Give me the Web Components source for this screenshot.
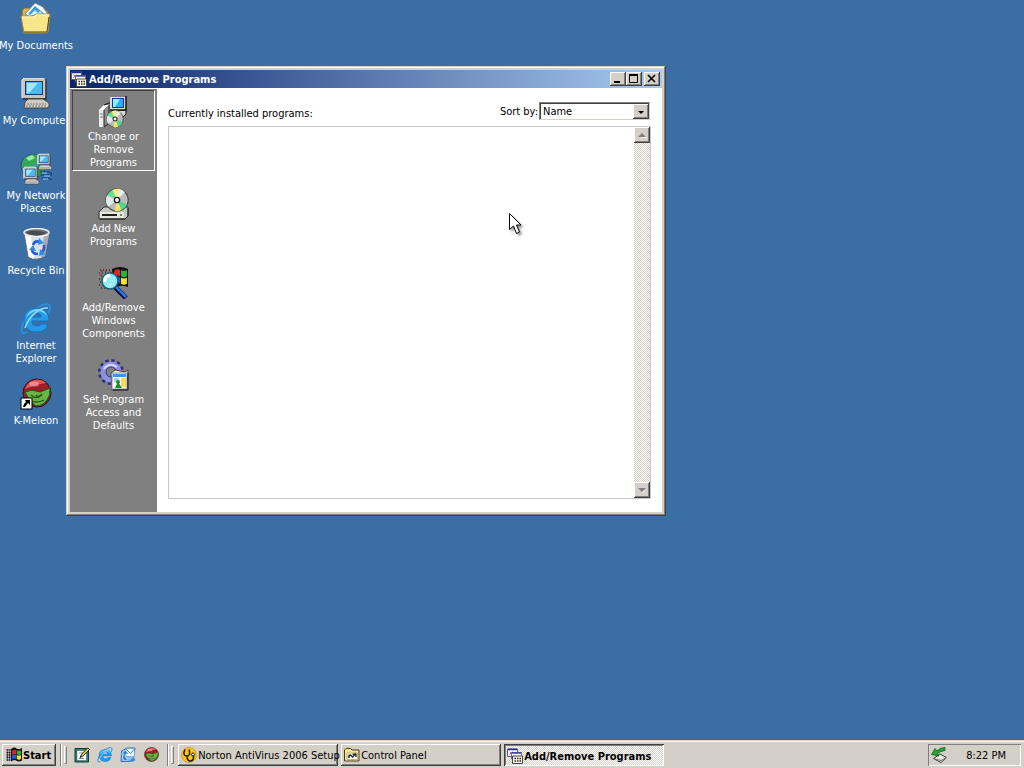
<!DOCTYPE html>
<html lang="en">
<head>
<meta charset="utf-8">
<title>Add/Remove Programs</title>
<style>
    html, body {
        height: 100%;
        margin: 0;
    }
    body {
        font-family: "DejaVu Sans Condensed", Tahoma, "Noto Sans", sans-serif;
        font-size: 11px;
        line-height: 13px;
        color: #000;
        overflow: hidden;
        --face: #d4d0c8;
        --desktop: #3a6ea5;
        --raised: inset -1px -1px #404040, inset 1px 1px #fff, inset -2px -2px #808080;
        --sunken: inset 1px 1px #808080, inset -1px -1px #fff;
    }
</style>
</head>
<body>
<desktop-screen>
    <desktop-icon icon="documents">My Documents</desktop-icon>
    <desktop-icon icon="computer">My Computer</desktop-icon>
    <desktop-icon icon="network">My Network Places</desktop-icon>
    <desktop-icon icon="recycle">Recycle Bin</desktop-icon>
    <desktop-icon icon="ie">Internet Explorer</desktop-icon>
    <desktop-icon icon="kmeleon-link">K-Meleon</desktop-icon>

    <app-window slot="window" icon="programs" heading="Add/Remove Programs">
        <side-item slot="side" icon="change" selected>Change or Remove Programs</side-item>
        <side-item slot="side" icon="add">Add New Programs</side-item>
        <side-item slot="side" icon="components">Add/Remove Windows Components</side-item>
        <side-item slot="side" icon="defaults">Set Program Access and Defaults</side-item>
        <program-list></program-list>
    </app-window>

    <task-bar slot="taskbar" time="8:22 PM">
        <quick-button slot="quick" icon="show-desktop" label="Show Desktop"></quick-button>
        <quick-button slot="quick" icon="ie" label="Internet Explorer"></quick-button>
        <quick-button slot="quick" icon="outlook" label="Outlook Express"></quick-button>
        <quick-button slot="quick" icon="kmeleon" label="K-Meleon"></quick-button>
        <task-button icon="norton">Norton AntiVirus 2006 Setup</task-button>
        <task-button icon="panel">Control Panel</task-button>
        <task-button icon="programs" active>Add/Remove Programs</task-button>
    </task-bar>
</desktop-screen>

<script>
// shared shapes
const monitor = /*html*/`
    <path d="M1 2L3 0H23L25 2V20H1z" fill="#c9c5bd"/>
    <path d="M1 20V2L3 0H23" fill="none" stroke="#f4f2ee"/>
    <path d="M25 1V21H2" fill="none" stroke="#333" stroke-width="1.5"/>
    <rect x="4" y="3" width="18" height="14" fill="#123a78"/>
    <rect x="5" y="4" width="16" height="12" fill="#4cb9f0"/>
    <path d="M6 5H17L8 15H6z" fill="#a8e6ff"/>
    <path d="M4 24L7 21H22L28 25V29L26 30H3z" fill="#cfcbc3" stroke="#47443e"/>
    <path d="M6 26H25M5 28H25" stroke="#817c72" stroke-dasharray="2 1"/>`;

const disc = /*html*/`
    <circle cx="0" cy="0" r="10" fill="#b9bcb8" stroke="#434843"/>
    <path d="M0 0L-9 -4A10 10 0 0 1 -4 -9z" fill="#5fe19a"/>
    <path d="M0 0L-4 -9A10 10 0 0 1 2 -10z" fill="#f4ef7c"/>
    <path d="M0 0L2 -10A10 10 0 0 1 7 -7z" fill="#e9ecea"/>
    <path d="M0 0L-9 -4A10 10 0 0 0 -8 6z" fill="#e3e8e6"/>
    <path d="M0 0L9 4A10 10 0 0 1 4 9z" fill="#4ed792"/>
    <path d="M0 0L4 9A10 10 0 0 1 -2 10z" fill="#f1e85f"/>
    <circle cx="0" cy="0" r="3" fill="#222"/><circle cx="0" cy="0" r="1.7" fill="#fff"/>`;

const flag = /*html*/`
    <path d="M0 2Q4 -1 7 1V7Q4 5 0 8z" fill="#e42424"/>
    <path d="M8 1Q12 3 15 1V7Q12 9 8 7z" fill="#27b536"/>
    <path d="M0 9Q4 6 7 8V14Q4 12 0 15z" fill="#2855e8"/>
    <path d="M8 8Q12 10 15 8V14Q12 16 8 14z" fill="#f4e52b"/>`;

const kmeleon = /*html*/`
    <circle cx="17" cy="15" r="14" fill="#9c1f26" stroke="#321313"/>
    <path d="M5 11A13 13 0 0 1 26 5Q17 6 5 11z" fill="#e25457"/>
    <ellipse cx="14" cy="6" rx="5" ry="2.5" fill="#f4a09f" opacity=".7"/>
    <path d="M5 14L12 12L20 14L30 10Q31 17 27 22Q23 28 16 28L10 23Z" fill="#69b541" stroke="#1f4d18"/>
    <path d="M11 17Q16 22 22 17M16 17L18 19L22 16M10 22Q16 26 24 22" fill="none" stroke="#245b1b" stroke-width="1.3"/>`;

const icons = {
    documents: /*html*/`
        <path d="M2 8L4 5H11L14 8H28V29H3z" fill="#d9b94d" stroke="#7e6a28"/>
        <path d="M5 11L15 0L23 4L29 13L17 18z" fill="#fff" stroke="#76828d"/>
        <path d="M8 11L15 3L26 12L17 15z" fill="#3c9ce0"/>
        <path d="M10 12L15 7L18 10L20 8L24 13z" fill="#c8f2fb"/>
        <path d="M1 13H13L16 11H30L28 29L26 30H4z" fill="#f8e68a" stroke="#a58c35"/>
        <path d="M2 14H14L16 12H29" fill="none" stroke="#fffbd0"/>
        <path d="M4 29H27L29 14" fill="none" stroke="#4c3f16"/>`,
    computer: `<g transform="translate(1 0)">${monitor}</g>`,
    network: /*html*/`
        <circle cx="13" cy="13" r="12" fill="#3d8ee0" stroke="#1d5c56"/>
        <path d="M3 8Q8 0 17 2L20 6L15 8L17 11L9 13L6 19L2 15z" fill="#34a853"/>
        <path d="M6 5L12 2L15 5L9 8z" fill="#9be9a3"/>
        <path d="M14 13L22 14L23 19L17 24z" fill="#26934a"/>
        <g transform="translate(17 1) scale(.52)">${monitor}</g>
        <g transform="translate(3 14) scale(.57)">${monitor}</g>
        <path d="M20 19H29L32 21M21 22H32M22 25H29L32 27" fill="none" stroke="#15396a"/>
        <path d="M22 20H27M24 23H30M23 26H28" stroke="#8fd0ff"/>`,
    recycle: /*html*/`
        <path d="M4 4L8 29Q17 34 25 28L29 5z" fill="#dcdfe4" stroke="#646b75"/>
        <path d="M5 7L9 29L14 31L11 9z" fill="#fff"/>
        <path d="M24 8L21 30L25 28L29 7z" fill="#a7abb5"/>
        <ellipse cx="16.500" cy="4.500" rx="12.500" ry="4" fill="#6a6d73" stroke="#edf0f3" stroke-width="1.5"/>
        <path d="M7 4Q15 1 26 5Q17 10 7 5z" fill="#484b50"/>
        <g fill="none" stroke="#285bd8" stroke-width="2.6">
            <path d="M13 17Q15 12 20 14"/><path d="M24 17Q25 22 21 25"/><path d="M18 26Q12 26 12 21"/>
        </g>
        <path d="M19 10L24 15L18 17zM20 21L19 28L25 26zM9 22L13 17L16 23z" fill="#2c8af1"/>`,
    ie: /*html*/`
        <path d="M7 29C-2 34 1 20 10 11C19 1 31 -2 30 5C30 7 29 9 28 10" fill="none" stroke="#2c8de0" stroke-width="2"/>
        <path fill-rule="evenodd" d="M29 18H12Q12 23 17 23Q20 23 21 21H28Q26 29 17 29Q4 29 4 17Q4 5 17 5Q29 5 29 18zM12 14H21Q21 10 17 10Q13 10 12 14z" fill="#249ae9" stroke="#176abb" stroke-width=".8"/>
        <path d="M6 15Q8 7 17 6Q25 6 27 13Q23 8 17 8Q10 9 6 15z" fill="#7dd4fb"/>
        <path d="M5 25C9 13 20 4 28 5" fill="none" stroke="#91ddff" stroke-width="1.5"/>`,
    kmeleon,
    'kmeleon-link': /*html*/`${kmeleon}
        <rect x="1" y="20" width="11" height="11" fill="#fff" stroke="#000"/>
        <path d="M5 22H10V27L8 25L5 29H3Q3 26 6 24z" fill="#000"/>`,
    change: /*html*/`
        <path d="M1 14H6V31H1z" fill="#ececec"/>
        <path d="M6 14L11 9V27L6 31z" fill="#8c8c8c" stroke="#222"/>
        <path d="M1 14L6 9H11L6 14z" fill="#fff"/>
        <path d="M2 18H5M2 21H5" stroke="#777"/>
        <path d="M6 9L11 7H14" fill="none" stroke="#111"/>
        <path d="M13 17L16 14H28V18L25 21H13z" fill="#d8d5ce" stroke="#111"/>
        <path d="M12 1H28V14H12z" fill="#d9d9d9"/>
        <path d="M28 0V14H12" fill="none" stroke="#111" stroke-width="1.500"/>
        <path d="M14 2H26V12H14z" fill="#0c3c9c"/>
        <path d="M15 3H25V11H15z" fill="#31a9ff"/>
        <path d="M15 3H22L17 11H15z" fill="#8cf2ff"/>
        <g transform="translate(17 23) scale(.83)">${disc}</g>`,
    add: /*html*/`
        <path d="M1 24L6 19H30V28L27 31H1z" fill="#c9c7c2" stroke="#333"/>
        <path d="M2 24H26V30H2z" fill="#e8e6e1"/>
        <path d="M4 27H19" stroke="#222" stroke-width="2"/>
        <path d="M22 27H24" stroke="#34a853" stroke-width="2"/>
        <path d="M2 31H27L30 28V20" fill="none" stroke="#222"/>
        <g transform="translate(19 12) scale(1.12)">${disc}</g>`,
    components: /*html*/`
        <path d="M2 3H17M1 6H16M3 9H15M1 12H15M2 15H14M1 18H14M3 21H14" stroke="#101010" stroke-dasharray="1 2"/>
        <path d="M3 4H12M2 8H8" stroke="#a11" stroke-dasharray="2 2"/>
        <path d="M14 2Q22 -2 30 2V20Q22 17 16 21z" fill="#111"/>
        <g transform="translate(16 2) scale(.86 1.050)">${flag}</g>
        <path d="M17 20L28 31" stroke="#04103f" stroke-width="5"/>
        <path d="M18 20L28 30" stroke="#2d78e7" stroke-width="2.5"/>
        <circle cx="12" cy="14" r="8" fill="#8cecf5" stroke="#1d5c78" stroke-width="1.5"/>
        <path d="M7 15Q6 9 12 8" fill="none" stroke="#fff" stroke-width="3"/>
        <path d="M9 17H17M10 19H15M12 14H18M11 11H17" stroke="#e4ffff" stroke-dasharray="1 1"/>`,
    defaults: /*html*/`
        <circle cx="13" cy="13" r="11" fill="none" stroke="#28307c" stroke-width="4" stroke-dasharray="3 2.76"/>
        <circle cx="13" cy="13" r="8" fill="none" stroke="#8e91e3" stroke-width="5"/>
        <circle cx="13" cy="13" r="5" fill="none" stroke="#333a86"/>
        <path d="M6 10Q11 3 19 8" fill="none" stroke="#d1d5ff" stroke-width="2"/>
        <path d="M13 14L17 11L27 13L30 11L29 30L14 31z" fill="#f9f9ef" stroke="#353c55"/>
        <path d="M14 14H29V30H14z" fill="#fff" stroke="#8a8a8a"/>
        <path d="M15 15H28V18H15z" fill="#3f94e7"/>
        <path d="M16 20H21M16 22H20" stroke="#5aa8ef"/>
        <path d="M23 19H28V28H23z" fill="#f6dc54"/>
        <path d="M17 29L20 23L24 29z" fill="#138a2c"/><circle cx="20" cy="23" r="2" fill="#208b35"/>
        <path d="M15 31H30V14" fill="none" stroke="#111"/>`,
    programs: /*html*/`
        <path d="M1 2H21V17H1z" fill="#fff" stroke="#5b5b7b" stroke-width="2"/>
        <path d="M2 3H20" stroke="#202a83" stroke-width="3"/>
        <path d="M5 8L11 13M11 8L5 13" stroke="#a83c60" stroke-width="2"/>
        <path d="M9 9H29V22H9z" fill="#fff" stroke="#6a6a8c" stroke-width="2"/>
        <path d="M10 10H28" stroke="#3946a6" stroke-width="3"/>
        <path d="M11 16H31V31H11z" fill="#fffbe9" stroke="#444" stroke-width="2"/>
        <path d="M15 21H29M15 26H29" stroke="#222" stroke-width="3" stroke-dasharray="3 2"/>`,
    windows: /*html*/`
        <path d="M1 6H12M1 11H12M1 16H12M1 21H12M1 26H12" stroke="#151515" stroke-width="3" stroke-dasharray="3 1"/>
        <path d="M2 8H10M2 13H10" stroke="#d32b2b" stroke-width="2" stroke-dasharray="2 2"/>
        <path d="M2 19H10M2 24H10" stroke="#2438c7" stroke-width="2" stroke-dasharray="2 2"/>
        <path d="M10 4Q17 -1 21 3Q27 6 32 2V27Q26 31 20 27Q16 24 10 29z" fill="#111"/>
        <g transform="translate(12 5) scale(1.2 1.35)">${flag}</g>`,
    'show-desktop': /*html*/`
        <path d="M2 3H29V30H2z" fill="#268070" stroke="#183d37" stroke-width="2"/>
        <path d="M6 7H25V27H6z" fill="#fff" stroke="#555"/>
        <path d="M10 12H18M10 23H20" stroke="#888" stroke-width="2"/>
        <path d="M12 21L15 15L27 2L31 5L18 18z" fill="#f4cd43" stroke="#222" stroke-width="2"/>`,
    outlook: /*html*/`
        <path d="M3 8L14 2H30L28 21L19 29H2z" fill="#8abdf1" stroke="#3771bb" stroke-width="2"/>
        <path d="M12 3H29V19H12z" fill="#e8f7ff" stroke="#528bc9"/>
        <path d="M12 4L21 13L29 4" fill="none" stroke="#4982bd" stroke-width="2"/>
        <path d="M10 28Q1 21 8 14H3L11 6L17 14H12Q7 20 16 25z" fill="#2b83d7" stroke="#fff"/>
        <path d="M18 30L27 21L31 26Q27 31 18 30z" fill="#3d8ed8"/>`,
    norton: /*html*/`
        <circle cx="16" cy="16" r="15" fill="#fbc421" stroke="#b17d00"/>
        <path d="M8 5Q2 17 12 18Q20 17 16 5M12 18Q12 28 19 28Q26 27 25 18" fill="none" stroke="#1f1800" stroke-width="3"/>
        <circle cx="24" cy="15" r="3" fill="#fff" stroke="#111" stroke-width="2"/>`,
    panel: /*html*/`
        <path d="M1 6L4 3H13L16 6H30V28H1z" fill="#f7e48a" stroke="#44401e" stroke-width="2"/>
        <path d="M6 12H27V25H6z" fill="#fff" stroke="#8d8146"/>
        <path d="M8 21L13 16L17 20L24 13M17 14H24V20M10 15V22" fill="none" stroke="#222" stroke-width="2.500"/>`,
    safely: /*html*/`
        <path d="M5 23L18 14L31 21L20 31z" fill="#e6e6e6" stroke="#333" stroke-width="2"/>
        <path d="M5 23L20 27L31 21" fill="none" stroke="#777" stroke-width="2"/>
        <path d="M28 1Q17 1 12 8L8 3L1 15L16 18L13 13Q19 8 28 7z" fill="#27a334" stroke="#115619" stroke-width="1.5"/>`
};

class WinIcon extends HTMLElement {
    constructor() {
        super();
        this.shadow = this.attachShadow({ mode: 'open' });
    }

    connectedCallback() {
        this.shadow.innerHTML = /*html*/`
            <style>
                :host { display: block; flex: none; width: 32px; height: 32px; }
                svg { display: block; width: 100%; height: 100%; }
            </style>
            <svg viewBox="0 0 32 32" aria-hidden="true">${icons[this.getAttribute('name')]}</svg>
        `;
    }
}

class DesktopScreen extends HTMLElement {
    constructor() {
        super();
        this.shadow = this.attachShadow({ mode: 'open' });
    }

    connectedCallback() {
        this.shadow.innerHTML = /*html*/`
            <style>
                :host {
                    display: flex;
                    flex-direction: column;
                    height: 100vh;
                    background: var(--desktop);
                }
                main {
                    position: relative;
                    flex: 1;
                    min-height: 0;
                }
                .icons {
                    display: grid;
                    grid-auto-rows: 75px;
                    width: 80px;
                    margin-left: -4px;
                }
                ::slotted([slot="window"]) {
                    position: absolute;
                    inset: 66px 358px 224px 66px;
                }
                .pointer {
                    position: absolute;
                    left: 509px;
                    top: 213px;
                    width: 16px;
                    height: 24px;
                    filter: drop-shadow(2px 2px 1px #0006);
                }
            </style>
            <main>
                <div class="icons"><slot></slot></div>
                <slot name="window"></slot>
                <svg class="pointer" viewBox="0 0 16 24" aria-hidden="true">
                    <path d="M.5 .5V16.500L4.500 13L7.500 20.500L10.500 19L7.500 12H12z" fill="#fff" stroke="#000"/>
                </svg>
            </main>
            <slot name="taskbar"></slot>
        `;
    }
}

class DesktopIcon extends HTMLElement {
    constructor() {
        super();
        this.shadow = this.attachShadow({ mode: 'open' });
    }

    connectedCallback() {
        this.shadow.innerHTML = /*html*/`
            <style>
                :host { display: block; }
                button {
                    display: flex;
                    flex-direction: column;
                    align-items: center;
                    gap: 4px;
                    width: 100%;
                    padding: 3px 0 0;
                    border: 0;
                    background: none;
                    font: inherit;
                    color: #fff;
                }
            </style>
            <button type="button">
                <win-icon name="${this.getAttribute('icon')}"></win-icon>
                <span><slot></slot></span>
            </button>
        `;
    }
}

class AppWindow extends HTMLElement {
    constructor() {
        super();
        this.shadow = this.attachShadow({ mode: 'open' });
    }

    connectedCallback() {
        this.shadow.innerHTML = /*html*/`
            <style>
                :host {
                    display: flex;
                    flex-direction: column;
                    box-sizing: border-box;
                    padding: 4px;
                    background: var(--face);
                    box-shadow: inset -1px -1px #404040, inset 1px 1px var(--face), inset -2px -2px #808080, inset 2px 2px #fff;
                }
                header {
                    display: flex;
                    align-items: center;
                    gap: 2px;
                    height: 18px;
                    padding: 0 2px 0 1px;
                    background: linear-gradient(90deg, #0a246a, #a6caf0);
                    color: #fff;
                }
                header win-icon { width: 16px; height: 16px; }
                h1 {
                    flex: 1;
                    margin: 0;
                    font: inherit;
                    font-weight: bold;
                }
                .controls { display: flex; }
                .controls button {
                    width: 16px;
                    height: 14px;
                    padding: 0;
                    border: 0;
                    background: var(--face);
                    box-shadow: var(--raised);
                }
                .controls .close { margin-left: 2px; }
                .controls svg { display: block; width: 16px; height: 14px; }
                .body {
                    display: flex;
                    flex: 1;
                    min-height: 0;
                    padding-top: 1px;
                    background: #fff;
                }
                nav {
                    display: flex;
                    flex-direction: column;
                    gap: 11px;
                    box-sizing: border-box;
                    width: 87px;
                    padding: 1px 2px;
                    background: #808080;
                }
                .content { display: flex; flex: 1; min-width: 0; }
            </style>
            <header>
                <win-icon name="${this.getAttribute('icon')}"></win-icon>
                <h1>${this.getAttribute('heading')}</h1>
                <div class="controls">
                    <button type="button" aria-label="Minimize">
                        <svg viewBox="0 0 16 14"><path d="M4 10H10" stroke="#000" stroke-width="2"/></svg>
                    </button>
                    <button type="button" aria-label="Maximize">
                        <svg viewBox="0 0 16 14"><path d="M3 3H12M3.500 2V10.500H11.500V2" fill="none" stroke="#000"/><path d="M3 3H12" stroke="#000" stroke-width="2"/></svg>
                    </button>
                    <button type="button" class="close" aria-label="Close">
                        <svg viewBox="0 0 16 14"><path d="M4 3L11 10M11 3L4 10" stroke="#000" stroke-width="1.600"/></svg>
                    </button>
                </div>
            </header>
            <div class="body">
                <nav><slot name="side"></slot></nav>
                <div class="content"><slot></slot></div>
            </div>
        `;
    }
}

class SideItem extends HTMLElement {
    constructor() {
        super();
        this.shadow = this.attachShadow({ mode: 'open' });
    }

    connectedCallback() {
        this.shadow.innerHTML = /*html*/`
            <style>
                :host { display: block; }
                button {
                    display: flex;
                    flex-direction: column;
                    align-items: center;
                    gap: 2px;
                    width: 100%;
                    padding: 5px 8px 1px;
                    border: 1px solid transparent;
                    background: none;
                    font: inherit;
                    color: #fff;
                }
                :host([selected]) button {
                    border-color: #404040 #fff #fff #404040;
                }
            </style>
            <button type="button">
                <win-icon name="${this.getAttribute('icon')}"></win-icon>
                <span><slot></slot></span>
            </button>
        `;
    }
}

class ProgramList extends HTMLElement {
    constructor() {
        super();
        this.shadow = this.attachShadow({ mode: 'open' });
    }

    connectedCallback() {
        this.shadow.innerHTML = /*html*/`
            <style>
                :host {
                    display: flex;
                    flex-direction: column;
                    flex: 1;
                    gap: 6px;
                    padding: 13px 11px;
                }
                .top {
                    display: flex;
                    align-items: flex-end;
                    justify-content: space-between;
                    padding-right: 1px;
                }
                .sort { display: flex; align-items: center; gap: 1px; }
                .combo {
                    display: grid;
                    width: 111px;
                    height: 18px;
                    box-sizing: border-box;
                    border: 1px solid;
                    border-color: #808080 #d4d0c8 #d4d0c8 #808080;
                    box-shadow: inset 1px 1px #404040;
                }
                .combo > * { grid-area: 1 / 1; }
                select {
                    appearance: none;
                    min-width: 0;
                    padding: 1px 18px 0 3px;
                    border: 0;
                    background: none;
                    font: inherit;
                    color: #000;
                    outline: none;
                }
                .arrow {
                    display: flex;
                    align-items: center;
                    justify-content: center;
                    justify-self: end;
                    width: 16px;
                    margin-top: 1px;
                    background: var(--face);
                    box-shadow: var(--raised);
                    pointer-events: none;
                }
                svg { display: block; width: 8px; height: 8px; }
                .list {
                    display: flex;
                    flex: 1;
                    justify-content: flex-end;
                    border: 1px solid #c8c8c8;
                }
                .scroll {
                    display: flex;
                    flex-direction: column;
                    justify-content: space-between;
                    width: 16px;
                    background: repeating-conic-gradient(#d4d0c8 0 25%, #fff 0 50%) 0 0 / 2px 2px;
                }
                .scroll button {
                    display: flex;
                    align-items: center;
                    justify-content: center;
                    width: 16px;
                    height: 16px;
                    padding: 0;
                    border: 0;
                    background: var(--face);
                    box-shadow: var(--raised);
                }
            </style>
            <div class="top">
                <span>Currently installed programs:</span>
                <div class="sort">
                    <label for="sort">Sort by:</label>
                    <div class="combo">
                        <select id="sort"><option>Name</option></select>
                        <span class="arrow"><svg viewBox="0 0 8 8"><path d="M1 3H7L4 6z"/></svg></span>
                    </div>
                </div>
            </div>
            <div class="list">
                <div class="scroll">
                    <button type="button" aria-label="Scroll up" disabled>
                        <svg viewBox="0 0 8 8"><path d="M1 7H9L8 6z" fill="#fff"/><path d="M0 6H8L4 2z" fill="#808080"/></svg>
                    </button>
                    <button type="button" aria-label="Scroll down" disabled>
                        <svg viewBox="0 0 8 8"><path d="M8 3L5 7L4 6z" fill="#fff"/><path d="M0 2H8L4 6z" fill="#808080"/></svg>
                    </button>
                </div>
            </div>
        `;
    }
}

class TaskBar extends HTMLElement {
    constructor() {
        super();
        this.shadow = this.attachShadow({ mode: 'open' });
    }

    connectedCallback() {
        this.shadow.innerHTML = /*html*/`
            <style>
                :host {
                    display: flex;
                    gap: 4px;
                    box-sizing: border-box;
                    height: 28px;
                    padding: 4px 3px 2px 2px;
                    background: var(--face);
                    box-shadow: inset 0 1px var(--face), inset 0 2px #fff;
                }
                .start {
                    display: flex;
                    align-items: center;
                    gap: 1px;
                    padding: 0 5px 0 4px;
                    border: 0;
                    background: var(--face);
                    box-shadow: var(--raised);
                    font: inherit;
                    font-weight: bold;
                }
                win-icon { width: 16px; height: 16px; }
                .grip { display: flex; gap: 2px; }
                .grip::before {
                    content: "";
                    width: 1px;
                    border-left: 1px solid #808080;
                    background: #fff;
                }
                .grip::after {
                    content: "";
                    width: 1px;
                    margin: 2px 0;
                    border: 1px solid;
                    border-color: #fff #808080 #808080 #fff;
                }
                .quick { display: flex; align-items: center; }
                .tasks { display: flex; flex: 1; gap: 3px; min-width: 0; }
                .tray {
                    display: flex;
                    align-items: center;
                    justify-content: space-between;
                    box-sizing: border-box;
                    width: 93px;
                    padding: 0 15px 0 3px;
                    box-shadow: var(--sunken);
                }
            </style>
            <button type="button" class="start"><win-icon name="windows"></win-icon>Start</button>
            <span class="grip"></span>
            <div class="quick"><slot name="quick"></slot></div>
            <span class="grip"></span>
            <div class="tasks"><slot></slot></div>
            <div class="tray">
                <win-icon name="safely"></win-icon>
                <time>${this.getAttribute('time')}</time>
            </div>
        `;
    }
}

class QuickButton extends HTMLElement {
    constructor() {
        super();
        this.shadow = this.attachShadow({ mode: 'open' });
    }

    connectedCallback() {
        this.shadow.innerHTML = /*html*/`
            <style>
                :host { display: block; }
                button {
                    display: block;
                    padding: 3px 4px 3px 3px;
                    border: 0;
                    background: none;
                }
                win-icon { width: 16px; height: 16px; }
            </style>
            <button type="button" aria-label="${this.getAttribute('label')}">
                <win-icon name="${this.getAttribute('icon')}"></win-icon>
            </button>
        `;
    }
}

class TaskButton extends HTMLElement {
    constructor() {
        super();
        this.shadow = this.attachShadow({ mode: 'open' });
    }

    connectedCallback() {
        this.shadow.innerHTML = /*html*/`
            <style>
                :host {
                    display: flex;
                    flex: 0 1 160px;
                    min-width: 0;
                }
                button {
                    display: flex;
                    flex: 1;
                    align-items: center;
                    gap: 1px;
                    min-width: 0;
                    padding: 0 0 0 3px;
                    border: 0;
                    background: var(--face);
                    box-shadow: var(--raised);
                    font: inherit;
                    text-align: left;
                }
                :host([active]) button {
                    padding-top: 2px;
                    background: repeating-conic-gradient(#d4d0c8 0 25%, #fff 0 50%) 0 0 / 2px 2px;
                    box-shadow: inset 1px 1px #404040, inset -1px -1px #fff, inset 2px 2px #808080;
                    font-weight: bold;
                }
                win-icon { width: 16px; height: 16px; }
                span { white-space: nowrap; }
            </style>
            <button type="button">
                <win-icon name="${this.getAttribute('icon')}"></win-icon>
                <span><slot></slot></span>
            </button>
        `;
    }
}

customElements.define('win-icon', WinIcon);
customElements.define('desktop-screen', DesktopScreen);
customElements.define('desktop-icon', DesktopIcon);
customElements.define('app-window', AppWindow);
customElements.define('side-item', SideItem);
customElements.define('program-list', ProgramList);
customElements.define('task-bar', TaskBar);
customElements.define('quick-button', QuickButton);
customElements.define('task-button', TaskButton);
</script>
</body>
</html>
